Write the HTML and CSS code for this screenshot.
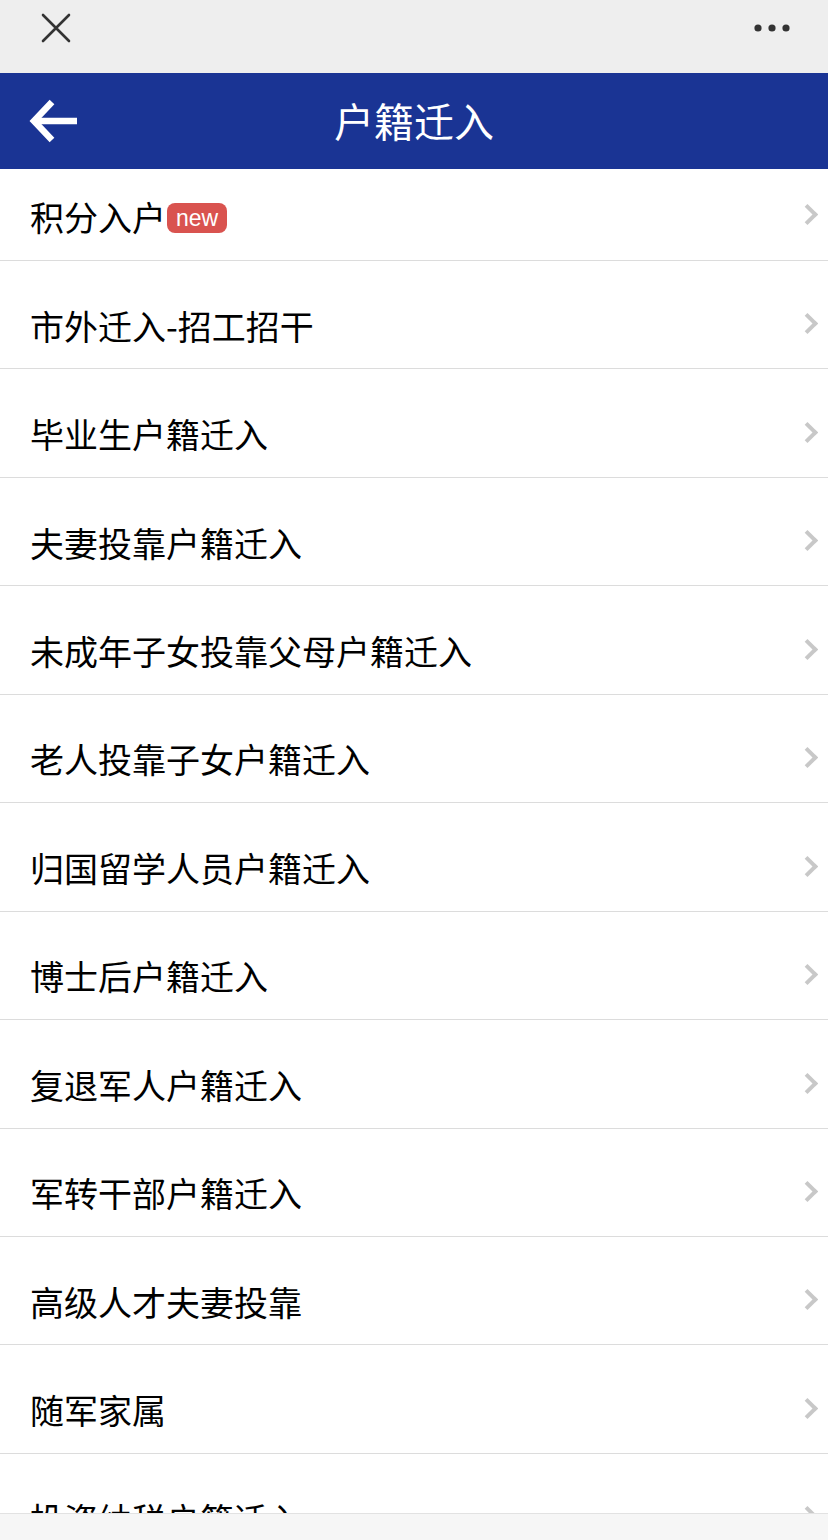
FILE: index.html
```html
<!DOCTYPE html>
<html lang="zh-CN">
<head>
  <meta charset="UTF-8">
  <meta name="viewport" content="width=device-width, initial-scale=1.0">
  <title>户籍迁入</title>
  <link rel="stylesheet" href="styles.css">
</head>
<body>
  <!-- Webview top bar -->
  <div class="top-bar">
    <svg class="close-icon" width="30" height="30" viewBox="0 0 30 30">
      <path d="M2 2 L28 28 M28 2 L2 28" stroke="#333" stroke-width="2.6" stroke-linecap="round" fill="none"/>
    </svg>
    <svg class="more-icon" width="40" height="10" viewBox="0 0 40 10">
      <circle cx="4" cy="5" r="3.6" fill="#333"/>
      <circle cx="18" cy="5" r="3.6" fill="#333"/>
      <circle cx="32" cy="5" r="3.6" fill="#333"/>
    </svg>
  </div>

  <!-- Page header -->
  <div class="header">
    <svg class="back-icon" width="50" height="46" viewBox="0 0 50 46">
      <path d="M4 23 H48" stroke="#fff" stroke-width="6.5" fill="none"/>
      <path d="M23 4 L5 23 L23 42" stroke="#fff" stroke-width="6.5" stroke-linejoin="miter" fill="none"/>
    </svg>
    <h1 class="title">户籍迁入</h1>
  </div>

  <ul class="menu">
    <li class="menu-item first"><span class="label">积分入户</span><span class="badge">new</span></li>
    <li class="menu-item"><span class="label">市外迁入-招工招干</span></li>
    <li class="menu-item"><span class="label">毕业生户籍迁入</span></li>
    <li class="menu-item"><span class="label">夫妻投靠户籍迁入</span></li>
    <li class="menu-item"><span class="label">未成年子女投靠父母户籍迁入</span></li>
    <li class="menu-item"><span class="label">老人投靠子女户籍迁入</span></li>
    <li class="menu-item"><span class="label">归国留学人员户籍迁入</span></li>
    <li class="menu-item"><span class="label">博士后户籍迁入</span></li>
    <li class="menu-item"><span class="label">复退军人户籍迁入</span></li>
    <li class="menu-item"><span class="label">军转干部户籍迁入</span></li>
    <li class="menu-item"><span class="label">高级人才夫妻投靠</span></li>
    <li class="menu-item"><span class="label">随军家属</span></li>
    <li class="menu-item"><span class="label">投资纳税户籍迁入</span></li>
  </ul>

  <!-- Browser toolbar at the bottom -->
  <div class="bottom-bar"></div>
</body>
</html>
```

FILE: styles.css
```css
/* General Styles */
body {
  margin: 0;
  font-family: "Noto Sans CJK SC", "Noto Sans", sans-serif;
  background-color: #fff;
  color: #000;
}

.top-bar {
  height: 73px;
  background-color: #eeeeee;
  display: flex;
  justify-content: space-between;
  align-items: flex-start;
  padding: 0 34px 0 41px;
}

.close-icon {
  margin-top: 13px;
}

.more-icon {
  margin-top: 23px;
}

.header {
  height: 96px;
  background-color: #1a3494;
  position: relative;
  display: flex;
  align-items: center;
  justify-content: center;
}

.back-icon {
  position: absolute;
  left: 29px;
  top: 25px;
}

.title {
  margin: 0;
  color: #fff;
  font-size: 40px;
  font-weight: normal;
  line-height: 1;
  margin-top: -3px;
}

.menu {
  list-style: none;
  margin: 0;
  padding: 0;
}

.menu-item {
  height: 90.45px;
  padding: 17px 0 0 30px;
  border-bottom: 1px solid #dcdcdc;
  display: flex;
  align-items: center;
  position: relative;
  font-size: 34px;
}

.menu-item.first {
  height: 91px;
  padding-top: 0;
}

/* chevron on the right of each row */
.menu-item::after {
  content: "";
  position: absolute;
  right: 13px;
  bottom: 37px;
  width: 11px;
  height: 11px;
  border-top: 4px solid #c8c8c8;
  border-right: 4px solid #c8c8c8;
  transform: rotate(45deg);
}

.menu-item.first::after {
  bottom: 38px;
}

.label {
  line-height: 1;
  margin-top: 5px;
}

.badge {
  background-color: #d9534f;
  color: #fff;
  font-family: "Liberation Sans", Arial, sans-serif;
  font-size: 23px;
  line-height: 30px;
  height: 30px;
  padding: 0 9px;
  border-radius: 8px;
  margin-top: 7px;
  margin-left: 1px;
}

.bottom-bar {
  position: fixed;
  left: 0;
  right: 0;
  bottom: 0;
  height: 26px;
  background-color: #f6f6f6;
  border-top: 1px solid #e2e2e2;
}
```
